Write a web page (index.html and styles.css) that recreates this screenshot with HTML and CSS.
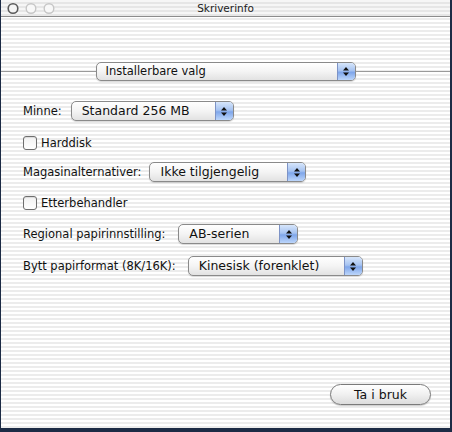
FILE: index.html
```html
<!DOCTYPE html>
<html>
<head>
<meta charset="utf-8">
<link rel="stylesheet" href="styles.css">
</head>
<body>
<div class="window">
  <div class="titlebar">
    <svg class="lights" width="60" height="16" viewBox="0 0 60 16">
      <circle cx="12" cy="8.5" r="4.8" fill="#f4f4f4" stroke="#5a5a5a" stroke-width="1.6"/>
      <circle cx="30" cy="8.5" r="4.8" fill="#f8f8f8" stroke="#c6c6c6" stroke-width="1.4"/>
      <circle cx="48" cy="8.5" r="4.8" fill="#f8f8f8" stroke="#c6c6c6" stroke-width="1.4"/>
    </svg>
    <div class="title">Skriverinfo</div>
  </div>
  <div class="content">
    <div class="sep-row">
      <div class="line"></div>
      <div class="popup wide"><span class="ptext">Installerbare valg</span><span class="arrows"><svg width="8" height="11" viewBox="0 0 8 11"><path d="M4 1 L7 4.5 L1 4.5 Z M4 10 L7 6.5 L1 6.5 Z" fill="#111"/></svg></span></div>
      <div class="line"></div>
    </div>

    <div class="row r-minne">
      <span class="label">Minne:</span>
      <div class="popup p-minne"><span class="ptext">Standard 256 MB</span><span class="arrows"><svg width="8" height="11" viewBox="0 0 8 11"><path d="M4 1 L7 4.5 L1 4.5 Z M4 10 L7 6.5 L1 6.5 Z" fill="#111"/></svg></span></div>
    </div>

    <div class="row r-check1">
      <span class="checkbox"></span><span class="label">Harddisk</span>
    </div>

    <div class="row r-mag">
      <span class="label">Magasinalternativer:</span>
      <div class="popup p-mag"><span class="ptext">Ikke tilgjengelig</span><span class="arrows"><svg width="8" height="11" viewBox="0 0 8 11"><path d="M4 1 L7 4.5 L1 4.5 Z M4 10 L7 6.5 L1 6.5 Z" fill="#111"/></svg></span></div>
    </div>

    <div class="row r-check2">
      <span class="checkbox"></span><span class="label">Etterbehandler</span>
    </div>

    <div class="row r-reg">
      <span class="label">Regional papirinnstilling:</span>
      <div class="popup p-reg"><span class="ptext">AB-serien</span><span class="arrows"><svg width="8" height="11" viewBox="0 0 8 11"><path d="M4 1 L7 4.5 L1 4.5 Z M4 10 L7 6.5 L1 6.5 Z" fill="#111"/></svg></span></div>
    </div>

    <div class="row r-bytt">
      <span class="label">Bytt papirformat (8K/16K):</span>
      <div class="popup p-bytt"><span class="ptext">Kinesisk (forenklet)</span><span class="arrows"><svg width="8" height="11" viewBox="0 0 8 11"><path d="M4 1 L7 4.5 L1 4.5 Z M4 10 L7 6.5 L1 6.5 Z" fill="#111"/></svg></span></div>
    </div>

    <div class="spacer"></div>

    <div class="button-row">
      <div class="button">Ta i bruk</div>
    </div>
  </div>
</div>
</body>
</html>
```
FILE: styles.css
```css
* { box-sizing: border-box; }
html, body {
  margin: 0;
  padding: 0;
  background: #1c2b45;
}
body {
  width: 452px;
  height: 432px;
  font-family: "DejaVu Sans", "Liberation Sans", sans-serif;
  color: #111;
}
.window {
  height: 428px;
  margin-left: 1px;
  width: 449px;
  display: flex;
  flex-direction: column;
  background: repeating-linear-gradient(to bottom, #ffffff 0px, #ffffff 2px, #ececec 2px, #ececec 4px);
  overflow: hidden;
}
.titlebar {
  height: 17px;
  flex: none;
  display: flex;
  align-items: center;
  border-bottom: 1px solid #8c8c8c;
  background: repeating-linear-gradient(to bottom, #f6f6f6 0px, #f6f6f6 2px, #e6e6e6 2px, #e6e6e6 4px);
}
.lights {
  flex: none;
  display: block;
}
.title {
  flex: 1;
  text-align: center;
  font-size: 10.5px;
  margin-right: 60px;
  color: #222;
}
.content {
  flex: 1;
  display: flex;
  flex-direction: column;
}
.sep-row {
  display: flex;
  align-items: center;
  margin-top: 45px;
}
.line {
  flex: 1;
  height: 1px;
  background: #9a9a9a;
}
.popup {
  height: 20px;
  display: flex;
  align-items: stretch;
  border: 1px solid #8a8a8a;
  border-radius: 5px;
  background: linear-gradient(to bottom, #ffffff 0%, #f4f4f4 50%, #e2e2e2 100%);
  box-shadow: 0 1px 1px rgba(0,0,0,0.15);
  overflow: hidden;
  font-size: 12.5px;
}
.popup .ptext {
  flex: 1;
  padding-left: 10px;
  line-height: 18px;
  white-space: nowrap;
}
.popup .arrows {
  width: 18px;
  flex: none;
  border-left: 1px solid #7d93c6;
  background: linear-gradient(to bottom, #d7e6fb 0%, #a6c3f1 45%, #7fa6ea 55%, #bcd6fb 100%);
  display: flex;
  align-items: center;
  justify-content: center;
}
.popup.wide {
  width: 260px;
  height: 19px;
  font-size: 11.5px;
}
.popup.wide .ptext { line-height: 17px; padding-left: 9px; }
.row {
  display: flex;
  align-items: center;
  padding-left: 22px;
  font-size: 11.5px;
}
.row .label { white-space: nowrap; }
.r-minne { margin-top: 20px; }
.r-minne .popup { margin-left: 9px; width: 163px; }
.r-check1 { margin-top: 15px; }
.checkbox {
  width: 14px;
  height: 14px;
  border: 1px solid #6e6e6e;
  border-radius: 3px;
  background: linear-gradient(to bottom, #f2f2f2, #ffffff);
  margin-right: 4px;
  box-shadow: inset 0 1px 1px rgba(0,0,0,0.1);
}
.r-mag { margin-top: 12px; }
.r-mag .popup { margin-left: 8px; width: 157px; }
.r-check2 { margin-top: 14px; }
.r-reg { margin-top: 14px; }
.r-reg .popup { margin-left: 13px; width: 120px; }
.r-bytt { margin-top: 12px; }
.r-bytt .popup { margin-left: 12px; width: 175px; }
.spacer { flex: 1; }
.button-row {
  display: flex;
  justify-content: flex-end;
  padding-right: 19px;
  margin-bottom: 23px;
}
.button {
  width: 101px;
  height: 21px;
  border: 1px solid #7a7a7a;
  border-radius: 11px;
  background: linear-gradient(to bottom, #ffffff 0%, #f0f0f0 50%, #dcdcdc 100%);
  box-shadow: 0 1px 1px rgba(0,0,0,0.2);
  font-size: 12.5px;
  text-align: center;
  line-height: 19px;
}
```
